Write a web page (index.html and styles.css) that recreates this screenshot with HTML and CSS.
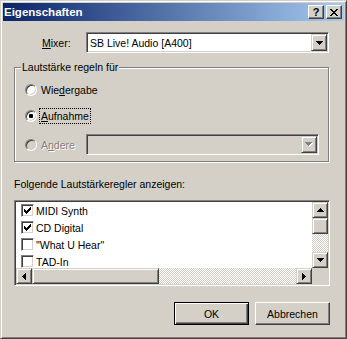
FILE: index.html
```html
<!DOCTYPE html>
<html lang="de">
<head>
    <meta charset="UTF-8">
    <title>Eigenschaften</title>
    <link rel="stylesheet" href="styles.css">
</head>
<body>

    <div class="window">
        <div class="titlebar">
            <span class="title">Eigenschaften</span>
            <div class="caption-btns">
                <span class="cap-btn help">?</span>
                <span class="cap-btn">
                    <svg width="8" height="7" viewBox="0 0 8 7" shape-rendering="crispEdges">
                        <path d="M0 0h2v1H0zM6 0h2v1H6zM1 1h2v1H1zM5 1h2v1H5zM2 2h4v1H2zM3 3h2v1H3zM2 4h4v1H2zM1 5h2v1H1zM5 5h2v1H5zM0 6h2v1H0zM6 6h2v1H6z"/>
                    </svg>
                </span>
            </div>
        </div>

        <div class="content">
            <div class="mixer-row">
                <span class="mixer-label"><u>M</u>ixer:</span>
                <div class="combo">
                    <span class="combo-text">SB Live! Audio [A400]</span>
                    <span class="drop-btn">
                        <svg width="7" height="4" viewBox="0 0 7 4" shape-rendering="crispEdges"><path d="M0 0h7v1H0zM1 1h5v1H1zM2 2h3v1H2zM3 3h1v1H3z"/></svg>
                    </span>
                </div>
            </div>

            <div class="group">
                <span class="group-title">Lautstärke regeln für</span>
                <div class="radio-row">
                    <span class="radio"></span>
                    <span class="radio-label">Wie<u>d</u>ergabe</span>
                </div>
                <div class="radio-row">
                    <span class="radio on"></span>
                    <span class="radio-label focused"><u>A</u>ufnahme</span>
                </div>
                <div class="radio-row tall">
                    <span class="radio disabled"></span>
                    <span class="radio-label disabled">A<u>n</u>dere</span>
                    <div class="combo small disabled">
                        <span class="combo-text"></span>
                        <span class="drop-btn">
                            <svg width="8" height="5" viewBox="0 0 8 5" shape-rendering="crispEdges">
                                <path fill="#fff" d="M1 1h7v1H1zM2 2h5v1H2zM3 3h3v1H3zM4 4h1v1H4z"/>
                                <path fill="#808080" d="M0 0h7v1H0zM1 1h5v1H1zM2 2h3v1H2zM3 3h1v1H3z"/>
                            </svg>
                        </span>
                    </div>
                </div>
            </div>

            <div class="list-label">Folgende Lautstärkeregler anzeigen:</div>

            <div class="listbox">
                <div class="list-items">
                    <div class="item"><span class="check on"><svg width="7" height="7" viewBox="0 0 7 7" shape-rendering="crispEdges"><path d="M0 2h1v3H0zM1 3h1v3H1zM2 4h1v3H2zM3 3h1v3H3zM4 2h1v3H4zM5 1h1v3H5zM6 0h1v3H6z"/></svg></span>MIDI Synth</div>
                    <div class="item"><span class="check on"><svg width="7" height="7" viewBox="0 0 7 7" shape-rendering="crispEdges"><path d="M0 2h1v3H0zM1 3h1v3H1zM2 4h1v3H2zM3 3h1v3H3zM4 2h1v3H4zM5 1h1v3H5zM6 0h1v3H6z"/></svg></span>CD Digital</div>
                    <div class="item"><span class="check"></span>"What U Hear"</div>
                    <div class="item"><span class="check"></span>TAD-In</div>
                </div>
                <div class="vscroll">
                    <span class="sb-btn"><svg width="7" height="4" viewBox="0 0 7 4" shape-rendering="crispEdges"><path d="M3 0h1v1H3zM2 1h3v1H2zM1 2h5v1H1zM0 3h7v1H0z"/></svg></span>
                    <span class="sb-btn"></span>
                    <span class="sb-track"></span>
                    <span class="sb-btn"><svg width="7" height="4" viewBox="0 0 7 4" shape-rendering="crispEdges"><path d="M0 0h7v1H0zM1 1h5v1H1zM2 2h3v1H2zM3 3h1v1H3z"/></svg></span>
                </div>
                <div class="hscroll">
                    <span class="sb-btn"><svg width="4" height="7" viewBox="0 0 4 7" shape-rendering="crispEdges"><path d="M0 3h1v1H0zM1 2h1v3H1zM2 1h1v5H2zM3 0h1v7H3z"/></svg></span>
                    <span class="sb-btn thumb-h"></span>
                    <span class="sb-track"></span>
                    <span class="sb-btn"><svg width="4" height="7" viewBox="0 0 4 7" shape-rendering="crispEdges"><path d="M0 0h1v7H0zM1 1h1v5H1zM2 2h1v3H2zM3 3h1v1H3z"/></svg></span>
                </div>
                <div class="corner"></div>
            </div>

            <div class="buttons">
                <button class="btn default">OK</button>
                <button class="btn">Abbrechen</button>
            </div>
        </div>
    </div>

</body>
</html>
```

FILE: styles.css
```css
body {
    margin: 0;
    font-family: "Liberation Sans", Arial, sans-serif;
    font-size: 10.5px;
    color: #000;
    background: #d4d0c8;
}
u {
    text-decoration-thickness: 1px;
    text-underline-offset: 1px;
}
.window {
    width: 347px;
    height: 339px;
    box-sizing: border-box;
    background: #d4d0c8;
    border: 1px solid;
    border-color: #d4d0c8 #404040 #404040 #d4d0c8;
    box-shadow: inset 1px 1px #fff, inset -1px -1px #808080;
    padding: 2px;
}
.titlebar {
    height: 18px;
    display: flex;
    align-items: center;
    justify-content: space-between;
    padding: 0 2px 0 1px;
    background: linear-gradient(90deg, #0a246a, #a6caf0);
}
.title {
    color: #fff;
    font-weight: bold;
    font-size: 11.5px;
}
.caption-btns {
    display: flex;
    gap: 2px;
}
.cap-btn {
    width: 16px;
    height: 14px;
    box-sizing: border-box;
    border: 1px solid;
    border-color: #fff #404040 #404040 #fff;
    box-shadow: inset -1px -1px #808080;
    background: #d4d0c8;
    display: flex;
    align-items: center;
    justify-content: center;
}
.cap-btn.help {
    font-weight: bold;
    font-size: 11px;
    line-height: 12px;
    padding-bottom: 1px;
}
.content {
    padding: 11px 14px 0 11px;
}
.mixer-row {
    display: flex;
    align-items: center;
}
.mixer-label {
    width: 44px;
    padding-left: 28px;
}
.combo {
    width: 243px;
    height: 21px;
    box-sizing: border-box;
    border: 1px solid;
    border-color: #808080 #fff #fff #808080;
    box-shadow: inset 1px 1px #404040, inset -1px -1px #d4d0c8;
    background: #fff;
    padding: 1px;
    display: flex;
    align-items: center;
}
.combo-text {
    flex: 1;
    padding-left: 2px;
}
.drop-btn {
    width: 16px;
    height: 17px;
    box-sizing: border-box;
    border: 1px solid;
    border-color: #d4d0c8 #404040 #404040 #d4d0c8;
    box-shadow: inset 1px 1px #fff, inset -1px -1px #808080;
    background: #d4d0c8;
    display: flex;
    align-items: center;
    justify-content: center;
}
.combo.small {
    width: 233px;
    margin-left: auto;
}
.combo.disabled {
    background: #d4d0c8;
}
.group {
    position: relative;
    width: 315px;
    height: 95px;
    box-sizing: border-box;
    margin-top: 14px;
    border: 1px solid #808080;
    box-shadow: inset 1px 1px #fff, 1px 1px #fff;
    padding: 14px 9px 0 10px;
    display: flex;
    flex-direction: column;
    gap: 10px;
}
.group-title {
    position: absolute;
    top: -7px;
    left: 6px;
    padding: 0 1px;
    line-height: 13px;
    background: #d4d0c8;
}
.radio-row {
    height: 16px;
    display: flex;
    align-items: center;
}
.radio-row.tall {
    height: 21px;
}
.radio {
    width: 12px;
    height: 12px;
    box-sizing: border-box;
    border-radius: 50%;
    border: 1px solid;
    border-color: #808080 #fff #fff #808080;
    box-shadow: inset 1px 1px #404040, inset -1px -1px #d4d0c8;
    background: #fff;
    display: flex;
    align-items: center;
    justify-content: center;
}
.radio.on::after {
    content: "";
    width: 4px;
    height: 4px;
    border-radius: 1px;
    background: #000;
}
.radio.disabled {
    background: #d4d0c8;
}
.radio-label {
    margin-left: 3px;
    padding: 0 1px;
    line-height: 14px;
}
.radio-label.focused {
    outline: 1px dotted #000;
}
.radio-label.disabled {
    color: #808080;
    text-shadow: 1px 1px #fff;
}
.list-label {
    margin-top: 16px;
    line-height: 13px;
}
.listbox {
    width: 316px;
    height: 86px;
    box-sizing: border-box;
    margin-top: 9px;
    border: 1px solid;
    border-color: #808080 #fff #fff #808080;
    box-shadow: inset 1px 1px #404040, inset -1px -1px #d4d0c8;
    padding: 1px;
    background: #fff;
    display: grid;
    grid-template-columns: 296px 16px;
    grid-template-rows: 66px 16px;
}
.list-items {
    overflow: hidden;
}
.item {
    height: 17px;
    display: flex;
    align-items: center;
    gap: 2px;
    padding-left: 5px;
}
.check {
    width: 13px;
    height: 13px;
    box-sizing: border-box;
    border: 1px solid;
    border-color: #808080 #fff #fff #808080;
    box-shadow: inset 1px 1px #404040, inset -1px -1px #d4d0c8;
    background: #fff;
    display: flex;
    align-items: center;
    justify-content: center;
}
.vscroll {
    display: flex;
    flex-direction: column;
}
.hscroll {
    display: flex;
}
.sb-btn {
    width: 16px;
    height: 16px;
    flex-shrink: 0;
    box-sizing: border-box;
    border: 1px solid;
    border-color: #d4d0c8 #404040 #404040 #d4d0c8;
    box-shadow: inset 1px 1px #fff, inset -1px -1px #808080;
    background: #d4d0c8;
    display: flex;
    align-items: center;
    justify-content: center;
}
.sb-btn.thumb-h {
    width: 127px;
}
.sb-track {
    flex: 1;
    background: repeating-conic-gradient(#fff 0 25%, #d4d0c8 0 50%) 0 0 / 2px 2px;
}
.corner {
    background: #d4d0c8;
}
.buttons {
    margin-top: 16px;
    display: flex;
    justify-content: flex-end;
    gap: 6px;
}
.btn {
    width: 75px;
    height: 23px;
    box-sizing: border-box;
    margin: 0;
    padding: 0;
    font: inherit;
    color: #000;
    background: #d4d0c8;
    border: 1px solid;
    border-color: #fff #404040 #404040 #fff;
    box-shadow: inset -1px -1px #808080;
}
.btn.default {
    border-color: #000;
    box-shadow: inset 1px 1px #fff, inset -1px -1px #404040, inset -2px -2px #808080;
}
```
